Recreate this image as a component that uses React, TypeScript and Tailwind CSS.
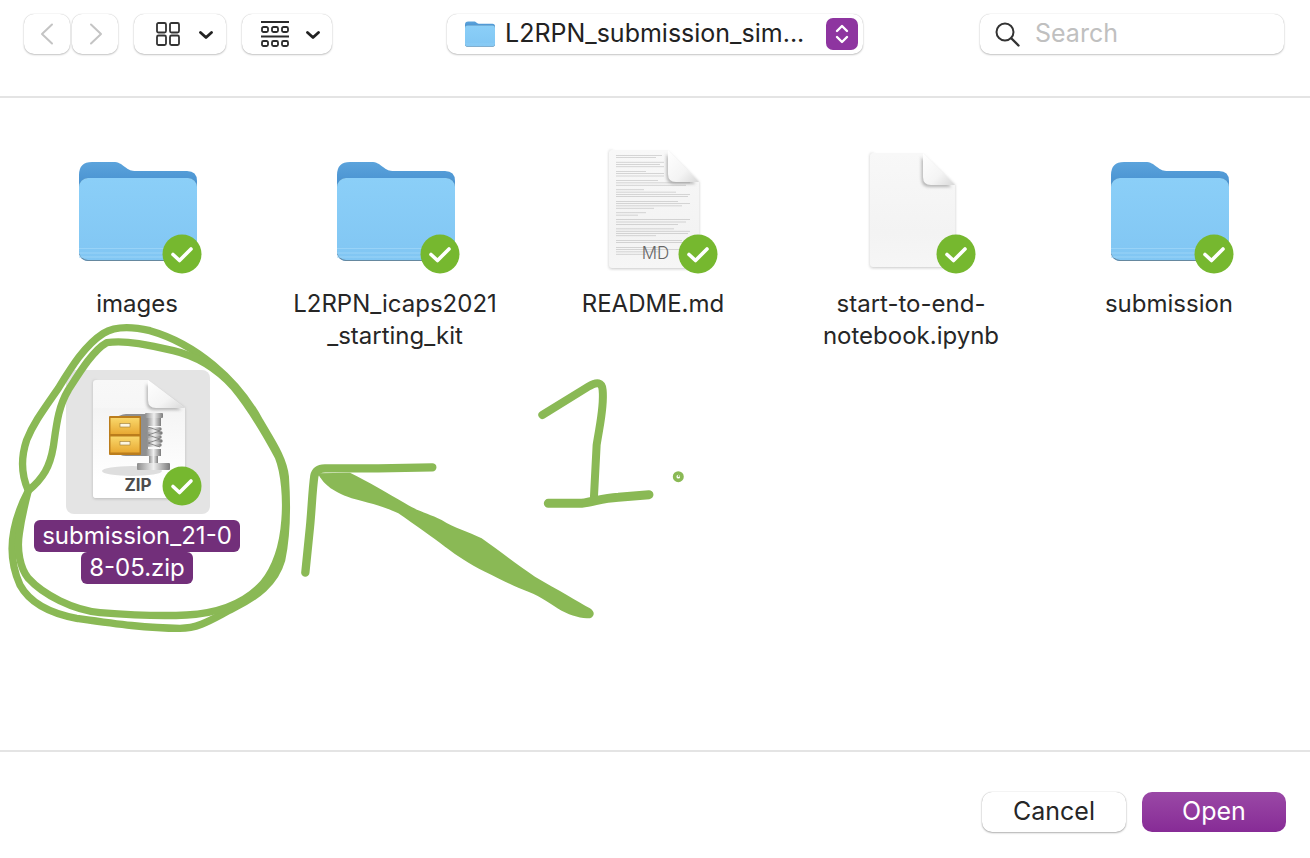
import React from "react";

const FONT = "font-['Inter','Liberation_Sans',sans-serif]";

const items = [
    { kind: "folder", lines: ["images"] },
    { kind: "folder", lines: ["L2RPN_icaps2021", "_starting_kit"] },
    { kind: "md", lines: ["README.md"] },
    { kind: "blank", lines: ["start-to-end-", "notebook.ipynb"] },
    { kind: "folder", lines: ["submission"] },
    { kind: "zip", lines: ["submission_21-0", "8-05.zip"], selected: true },
];

// widths of the tiny "text" lines on the README preview
const mdLines = [46, 40, 0, 50, 44, 70, 0, 30, 74, 66, 0, 42, 74, 70, 0, 28, 60, 74, 72, 0, 62, 74, 66, 38, 0, 30, 22, 0, 74, 70, 62, 0, 58, 74, 72, 40, 0, 66, 74, 0, 50, 72, 44, 30];

const Badge = () => (
    <g>
        <circle cx="116" cy="116" r="19.5" fill="#76b82f" />
        <path d="M107 116.5l6.5 6 11.5-11.5" fill="none" stroke="#fff" strokeWidth="3.6" strokeLinecap="round" strokeLinejoin="round" />
    </g>
);

const FolderShape = () => (
    <>
        <defs>
            <linearGradient id="folderBack" x1="0" y1="0" x2="0" y2="1">
                <stop offset="0" stopColor="#5ba3dc" />
                <stop offset="0.2" stopColor="#4b94d2" />
                <stop offset="1" stopColor="#3f8ccb" />
            </linearGradient>
            <linearGradient id="folderFront" x1="0" y1="0" x2="0" y2="1">
                <stop offset="0" stopColor="#8bcff8" />
                <stop offset="1" stopColor="#81c6f3" />
            </linearGradient>
        </defs>
        <path d="M13 37q0-13 13-13h21c6 0 8 2 12 5s6 4 11 4h51q10 0 10 10v70q0 10-10 10H23q-10 0-10-10Z" fill="url(#folderBack)" />
        <rect x="13" y="40" width="118" height="83" rx="9" fill="#66889f" />
        <rect x="13" y="40" width="118" height="82" rx="9" fill="url(#folderFront)" />
        <path d="M13 110h118v1H13ZM13 114.500h118v1H13ZM13 118.500h118v1H13Z" fill="#99d3f7" />
    </>
);

const DocShape = ({ x, y, r, b, foldX, foldY }: { x: number; y: number; r: number; b: number; foldX: number; foldY: number }) => (
    <>
        <defs>
            <linearGradient id="docBody" x1="0" y1="0" x2="0" y2="1">
                <stop offset="0" stopColor="#f8f8f8" />
                <stop offset="0.7" stopColor="#f3f3f3" />
                <stop offset="1" stopColor="#f6f6f6" />
            </linearGradient>
            <linearGradient id="docFold" x1="0" y1="0" x2="1" y2="1">
                <stop offset="0" stopColor="#ffffff" />
                <stop offset="0.6" stopColor="#f4f4f4" />
                <stop offset="1" stopColor="#d8d8d8" />
            </linearGradient>
            <filter id="soft" x="-30%" y="-30%" width="160%" height="160%">
                <feGaussianBlur stdDeviation="1.5" />
            </filter>
        </defs>
        <path d={`M${x + 3} ${y + 2}H${foldX}L${r} ${foldY}V${b - 2}q0 3-3 3H${x + 3}q-3 0-3-3V${y + 3}q0-3 3-3Z`} fill="#9a9a9a" opacity="0.55" filter="url(#soft)" />
        <path d={`M${x + 3} ${y}H${foldX}L${r} ${foldY}V${b - 3}q0 3-3 3H${x + 3}q-3 0-3-3V${y + 3}q0-3 3-3Z`} fill="url(#docBody)" />
    </>
);

const Fold = ({ foldX, y, r, foldY }: { foldX: number; y: number; r: number; foldY: number }) => (
    <>
        <path d={`M${foldX} ${y + 2}V${foldY - 8}q0 8 8 8H${r - 2}Z`} fill="#777" opacity="0.5" filter="url(#soft)" transform="translate(-1.500 2)" />
        <path d={`M${foldX} ${y}V${foldY - 8}q0 8 8 8H${r}Z`} fill="url(#docFold)" />
    </>
);

const FolderIcon = () => (
    <svg viewBox="0 0 144 144" className="w-[144px] h-[144px]">
        <FolderShape />
        <Badge />
    </svg>
);

const MdIcon = () => (
    <svg viewBox="0 0 144 144" className="w-[144px] h-[144px]">
        <DocShape x={27} y={12} r={117} b={130} foldX={86} foldY={44} />
        {mdLines.map((w, i) =>
            w ? <rect key={i} x={34} y={17 + i * 2.3} width={i < 12 ? Math.min(w, 48) : w} height={0.6} fill="#8f8f8f" opacity="0.55" /> : null
        )}
        <Fold foldX={86} y={12} r={117} foldY={44} />
        <text x="73.500" y="120.500" textAnchor="middle" fontSize="17" fontWeight="300" fill="#666" fontFamily="Inter, sans-serif">MD</text>
        <Badge />
    </svg>
);

const BlankIcon = () => (
    <svg viewBox="0 0 144 144" className="w-[144px] h-[144px]">
        <DocShape x={30} y={15} r={115} b={129} foldX={83} foldY={47} />
        <Fold foldX={83} y={15} r={115} foldY={47} />
        <Badge />
    </svg>
);

const ZipIcon = () => (
    <svg viewBox="0 0 144 144" className="w-[144px] h-[144px]">
        <defs>
            <linearGradient id="zipMetal" x1="0" y1="0" x2="1" y2="0">
                <stop offset="0" stopColor="#8d8d8d" />
                <stop offset="0.5" stopColor="#efefef" />
                <stop offset="1" stopColor="#7b7b7b" />
            </linearGradient>
            <linearGradient id="zipDrawer" x1="0" y1="0" x2="0" y2="1">
                <stop offset="0" stopColor="#f9d76a" />
                <stop offset="1" stopColor="#e8a933" />
            </linearGradient>
            <linearGradient id="zipPage" x1="0" y1="0" x2="0" y2="1">
                <stop offset="0" stopColor="#f4f4f4" />
                <stop offset="0.8" stopColor="#ffffff" />
            </linearGradient>
        </defs>
        <DocShape x={27} y={10} r={119} b={128} foldX={82} foldY={38} />
        <path d="M27 38H119V125q0 3-3 3H30q-3 0-3-3Z" fill="url(#zipPage)" />
        <ellipse cx="66" cy="101" rx="30" ry="5" fill="#dedede" />
        <Fold foldX={82} y={10} r={119} foldY={38} />
        <path d="M50 50q3-6 10-6h22v42H60q-7 0-10-5Z" fill="#8f8f8f" />
        <rect x="79" y="43" width="18" height="5" rx="1" fill="url(#zipMetal)" />
        <rect x="81" y="48" width="14" height="8" fill="url(#zipMetal)" />
        <path d="M82 59h12M81 63h14M82 67h12M81 71h14M82 75h12" stroke="url(#zipMetal)" strokeWidth="3.400" strokeLinecap="round" />
        <path d="M82 57l12 4-12 4 12 4-12 4 12 4" stroke="#777" strokeWidth="0.8" fill="none" />
        <rect x="80" y="79" width="15" height="7" fill="url(#zipMetal)" />
        <rect x="83" y="86" width="9" height="8" fill="url(#zipMetal)" />
        <rect x="71" y="93" width="33" height="7" rx="1" fill="url(#zipMetal)" />
        <rect x="43" y="46" width="32" height="39" rx="1" fill="#bb7d1c" />
        <rect x="44.500" y="48" width="29" height="16" fill="url(#zipDrawer)" />
        <rect x="44.500" y="66.500" width="29" height="16" fill="url(#zipDrawer)" />
        <rect x="54" y="53.500" width="10" height="3.500" fill="#fdf6e0" stroke="#9a7a35" strokeWidth="0.6" />
        <rect x="54" y="71.500" width="10" height="3.500" fill="#fdf6e0" stroke="#9a7a35" strokeWidth="0.6" />
        <text x="72" y="120.500" textAnchor="middle" fontSize="17" fontWeight="700" fill="#4d4d4d" fontFamily="Inter, sans-serif">ZIP</text>
        <Badge />
    </svg>
);

const icons: Record<string, React.FC> = { folder: FolderIcon, md: MdIcon, blank: BlankIcon, zip: ZipIcon };

const ToolButton = ({ className, children }: { className: string; children: React.ReactNode }) => (
    <div className={`h-[40px] rounded-[10px] bg-white shadow-[0_1px_2px_rgba(0,0,0,0.22),0_0_1px_rgba(0,0,0,0.25)] ${className}`}>{children}</div>
);

const Chevron = ({ className }: { className: string }) => (
    <svg viewBox="0 0 14 8" className={`w-[14px] h-[8px] ${className}`}>
        <path d="M1.500 1.500L7 6.500l5.500-5" fill="none" stroke="#222" strokeWidth="2.800" strokeLinecap="round" strokeLinejoin="round" />
    </svg>
);

const Toolbar = () => (
    <div className="h-[98px] shrink-0 border-b-2 border-[#e4e4e4] flex items-start pt-[14px] pl-[24px]">
        <div className="flex gap-[2px]">
            <ToolButton className="w-[46px] flex items-center justify-center">
                <svg viewBox="0 0 14 22" className="w-[14px] h-[22px]">
                    <path d="M12 1.500L2 11l10 9.500" fill="none" stroke="#c4c4c4" strokeWidth="2" strokeLinecap="round" strokeLinejoin="round" />
                </svg>
            </ToolButton>
            <ToolButton className="w-[46px] flex items-center justify-center">
                <svg viewBox="0 0 14 22" className="w-[14px] h-[22px] ml-[2px]">
                    <path d="M2 1.500L12 11 2 20.500" fill="none" stroke="#c4c4c4" strokeWidth="2" strokeLinecap="round" strokeLinejoin="round" />
                </svg>
            </ToolButton>
        </div>
        <ToolButton className="ml-[16px] w-[92px] flex items-center pl-[22px]">
            <svg viewBox="0 0 24 24" className="w-[24px] h-[24px]" fill="none" stroke="#333" strokeWidth="1.800">
                <rect x="1" y="1" width="9" height="9.500" rx="1.500" />
                <rect x="14" y="1" width="9" height="9.500" rx="1.500" />
                <rect x="1" y="13.500" width="9" height="9.500" rx="1.500" />
                <rect x="14" y="13.500" width="9" height="9.500" rx="1.500" />
            </svg>
            <Chevron className="ml-[19px] mt-[2px]" />
        </ToolButton>
        <ToolButton className="ml-[16px] w-[90px] flex items-center pl-[19px]">
            <svg viewBox="0 0 28 26" className="w-[28px] h-[26px]" fill="none" stroke="#2c2c2c">
                <path d="M0 1h28M0 15.500h28" strokeWidth="1.800" />
                <rect x="1" y="6" width="6" height="5" rx="1.500" strokeWidth="1.800" />
                <rect x="11" y="6" width="6" height="5" rx="1.500" strokeWidth="1.800" />
                <rect x="21" y="6" width="6" height="5" rx="1.500" strokeWidth="1.800" />
                <rect x="1" y="20" width="6" height="5" rx="1.500" strokeWidth="1.800" />
                <rect x="11" y="20" width="6" height="5" rx="1.500" strokeWidth="1.800" />
                <rect x="21" y="20" width="6" height="5" rx="1.500" strokeWidth="1.800" />
            </svg>
            <Chevron className="ml-[17px] mt-[2px]" />
        </ToolButton>

        {/* path popup */}
        <ToolButton className="ml-[115px] w-[416px] flex items-center pl-[18px] pr-[5px]">
            <svg viewBox="13 24 118 99" className="w-[30px] h-[26px] shrink-0">
                <FolderShape />
            </svg>
            <span className="ml-[10px] text-[25px] text-[#222] whitespace-nowrap">L2RPN_submission_sim...</span>
            <div className="ml-auto w-[32px] h-[32px] rounded-[7px] bg-[#8e35a0] flex items-center justify-center">
                <svg viewBox="0 0 16 24" className="w-[16px] h-[24px]" fill="none" stroke="#fff" strokeWidth="2.400" strokeLinecap="round" strokeLinejoin="round">
                    <path d="M3 9l5-5 5 5M3 15l5 5 5-5" />
                </svg>
            </div>
        </ToolButton>

        <ToolButton className="ml-[117px] w-[304px] flex items-center pl-[15px]">
            <svg viewBox="0 0 25 25" className="w-[25px] h-[25px] shrink-0" fill="none" stroke="#333" strokeWidth="2" strokeLinecap="round">
                <circle cx="10" cy="10" r="8.500" />
                <path d="M16.500 16.500L23.500 23.500" strokeWidth="2.400" />
            </svg>
            <span className="ml-[15px] text-[25px] text-[#c0c0c0]">Search</span>
        </ToolButton>
    </div>
);

const FileItem = ({ kind, lines, selected }: { kind: string; lines: string[]; selected?: boolean }) => {
    const Icon = icons[kind];
    return (
        <div className="flex flex-col items-center">
            <div className={`w-[144px] h-[144px] rounded-[8px] ${selected ? "bg-[#e4e4e4]" : ""}`}>
                <Icon />
            </div>
            <div className="mt-[6px] -ml-[2px] flex flex-col items-center text-[24px] leading-[32px] text-[#262626]">
                {lines.map((line) => (
                    <span key={line} className={`px-[8px] whitespace-nowrap ${selected ? "bg-[#722f7a] text-white rounded-[6px]" : ""}`}>
                        {line}
                    </span>
                ))}
            </div>
        </div>
    );
};

const Scribbles = () => (
    <svg viewBox="0 0 1310 858" className="absolute inset-0 w-[1310px] h-[858px] pointer-events-none">
        <g transform="translate(0 320) scale(0.3333)" fill="none" stroke="#8ab955" strokeWidth="22" strokeLinecap="round" strokeLinejoin="round">
            <path d="M85 512C66 470 60 420 80 360C100 310 130 270 175 205C215 140 255 75 310 40C350 15 400 20 450 32C520 52 580 85 640 135C700 185 745 240 780 305C815 365 850 415 856 470C862 560 862 640 845 720C825 790 770 830 700 865C640 895 600 925 540 925C440 925 350 912 230 895C150 880 90 850 60 795C35 740 30 690 42 630C50 590 65 550 85 512Z" />
            <path d="M85 512C130 475 150 440 160 380C170 310 175 260 205 210C240 155 280 90 320 68C380 60 450 75 520 92C590 108 650 145 700 200C750 260 800 345 835 410C855 460 860 540 855 600C850 670 830 740 790 790C740 845 660 880 560 885C470 890 390 885 300 878C220 870 130 825 85 775C60 745 50 690 58 640C65 590 75 550 85 512Z" />
        </g>
        <g transform="translate(295 370) scale(0.3333)">
            <path d="M31 608L45 470C50 420 52 360 58 318Q62 296 90 295L250 295L412 292" fill="none" stroke="#8ab955" strokeWidth="25" strokeLinecap="round" strokeLinejoin="round" />
            <path d="M68 310C85 340 105 362 170 385C230 400 280 415 310 430C360 465 410 500 450 530C490 560 520 580 570 605C620 630 660 650 700 665C740 680 770 705 800 722C830 738 860 745 885 745C900 738 900 725 885 715C850 695 790 660 720 620C660 580 610 540 560 505C520 485 480 475 440 450C400 430 370 425 330 400C280 370 220 335 165 308Z" fill="#8ab955" />
            <path d="M742 135L880 50Q920 25 923 60C928 110 915 160 905 225L897 380" fill="none" stroke="#8ab955" strokeWidth="24" strokeLinecap="round" strokeLinejoin="round" />
            <path d="M760 400L860 400C900 395 920 385 970 382L1062 374" fill="none" stroke="#8ab955" strokeWidth="27" strokeLinecap="round" strokeLinejoin="round" />
            <circle cx="1150" cy="320" r="11" fill="none" stroke="#8ab955" strokeWidth="11" />
            <circle cx="1151" cy="318" r="3" fill="#8ab955" />
        </g>
    </svg>
);

export default function App() {
    return (
        <div className={`relative w-[1310px] h-[858px] bg-white overflow-hidden flex flex-col ${FONT}`}>
            <Toolbar />
            <div className="flex-1 pt-[40px] pl-[9px] grid grid-cols-[repeat(5,258px)] auto-rows-[232px]">
                {items.map((item) => (
                    <FileItem key={item.lines[0]} kind={item.kind} lines={item.lines} selected={item.selected} />
                ))}
            </div>
            <div className="h-[108px] shrink-0 border-t-2 border-[#e4e4e4] flex justify-end items-start pt-[40px] pr-[24px] gap-[16px]">
                <button className="w-[144px] h-[40px] rounded-[10px] bg-white text-[25px] text-[#262626] shadow-[0_1px_2px_rgba(0,0,0,0.3),0_0_1px_rgba(0,0,0,0.3)]">Cancel</button>
                <button className="w-[144px] h-[40px] rounded-[10px] bg-gradient-to-b from-[#9a48a6] to-[#872b96] text-[25px] text-white">Open</button>
            </div>
            <Scribbles />
        </div>
    );
}
